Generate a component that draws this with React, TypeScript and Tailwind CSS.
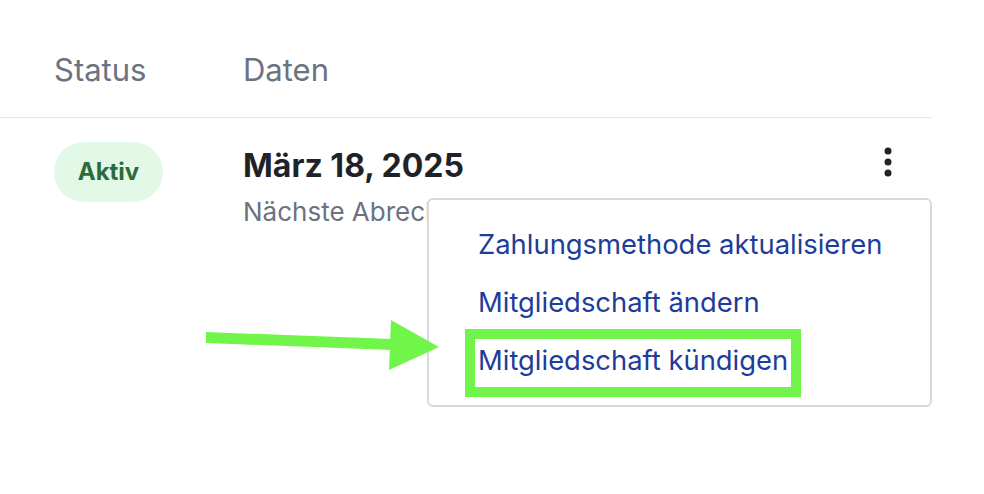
import React from "react";

export default function App() {
  return (
    <div className="relative w-[984px] h-[494px] bg-white overflow-hidden" style={{ fontFamily: "Inter, 'Noto Sans', sans-serif" }}>
      <div className="w-[932px]">
        <div className="h-[118px] box-border border-b border-[#e5e7eb] pt-[51px] flex text-[31px] leading-[37px] text-[#6b7280]">
          <div className="pl-[54px] w-[243px]">Status</div>
          <div>Daten</div>
        </div>
        <div className="relative flex pt-[24px]">
          <div className="pl-[54px] w-[243px]">
            <div className="w-[109px] h-[60px] rounded-full bg-[#e3f9e8] flex items-center justify-center text-[24px] font-bold text-[#2c6b3a]">
              Aktiv
            </div>
          </div>
          <div className="mt-[4px]">
            <div className="text-[32px] leading-[40px] font-bold text-[#1f2328]">März 18, 2025</div>
            <div className="mt-[10px] text-[26px] leading-[32px] text-[#6b7280] whitespace-nowrap">Nächste Abrechnung</div>
          </div>
          <div className="ml-auto mr-[32px] w-[24px] h-[40px] flex items-center justify-center">
            <svg width="10" height="32" viewBox="0 0 10 32">
              <circle cx="5" cy="5" r="3.5" fill="#1f2328" />
              <circle cx="5" cy="16" r="3.5" fill="#1f2328" />
              <circle cx="5" cy="27" r="3.5" fill="#1f2328" />
            </svg>
          </div>
        </div>
      </div>

      <div className="absolute left-[427px] top-[198px] w-[505px] h-[209px] box-border border-[2px] border-[#d9d9dc] rounded-[6px] bg-white py-[16px] pl-[49px]">
        <div className="h-[58px] flex items-center text-[27.4px] text-[#1d3d99] whitespace-nowrap">Zahlungsmethode aktualisieren</div>
        <div className="h-[58px] flex items-center text-[27.4px] text-[#1d3d99] whitespace-nowrap">Mitgliedschaft ändern</div>
        <div className="h-[58px] flex items-center text-[27.4px] text-[#1d3d99] whitespace-nowrap">Mitgliedschaft kündigen</div>
        <div className="absolute left-[36px] top-[129px] w-[336px] h-[68px] box-border border-[10px] border-[#70f34b]"></div>
      </div>

      <svg className="absolute left-0 top-0" width="984" height="494" viewBox="0 0 984 494">
        <polygon points="206,332 392,339 392,350 206,343" fill="#72f54a" />
        <polygon points="391,320 439,347 389,370" fill="#72f54a" />
      </svg>
    </div>
  );
}
